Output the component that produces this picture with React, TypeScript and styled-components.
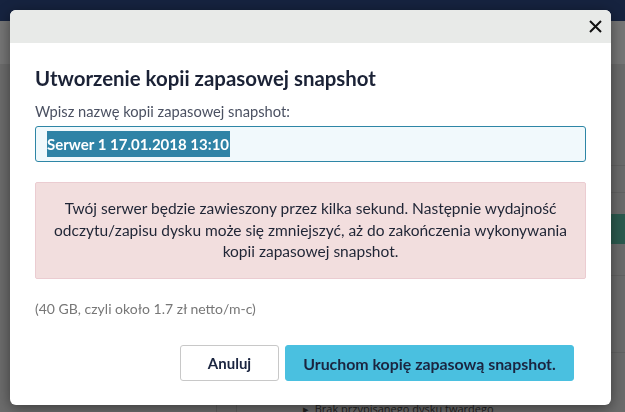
import React from "react";
import styled, { createGlobalStyle } from "styled-components";

const Global = createGlobalStyle`
  html, body { margin: 0; padding: 0; }
  body {
    width: 625px;
    height: 412px;
    overflow: hidden;
    background: #6b6b6b;
    font-family: Lato, "Open Sans", sans-serif;
  }
`;

const Page = styled.div`
  width: 625px;
  height: 412px;
  display: flex;
  flex-direction: column;
  background: #6b6b6b;
`;

const TopBar = styled.div`
  height: 24px;
  background: #16233f;
`;

const SubBar = styled.div`
  height: 48px;
  background: #767676;
`;

const Content = styled.div`
  flex: 1;
  display: grid;
  grid-template-columns: 216px 21px 1fr;
`;

const SideCol = styled.div`
  background: #6c6c6c;
`;

const Divider = styled.div`
  border-left: 1px solid #5e5e5e;
  border-right: 1px solid #5e5e5e;
  background: #6a6a6a;
`;

const MainCol = styled.div`
  display: flex;
  flex-direction: column;
  padding-top: 101px;
`;

const BgRow = styled.div<{ $h: number }>`
  height: ${(p) => p.$h}px;
  box-sizing: border-box;
  border-top: 1px solid #626262;
  display: flex;
  justify-content: flex-end;
  align-items: flex-start;
`;

const GreenBox = styled.div`
  width: 24px;
  height: 30px;
  margin-top: 21px;
  background: #2b5a4e;
  margin-right: -6px;
`;

const BgText = styled.div`
  position: absolute;
  left: 303px;
  top: 401px;
  font-family: "Open Sans", sans-serif;
  font-size: 11px;
  color: #222;
  white-space: nowrap;
`;

const Overlay = styled.div`
  position: fixed;
  inset: 0;
  padding: 10px 14px 7px 10px;
  display: flex;
  align-items: flex-start;
`;

const Modal = styled.div`
  width: 601px;
  height: 395px;
  background: #fff;
  border-radius: 6px;
  overflow: hidden;
  box-shadow: 0 3px 14px rgba(0, 0, 0, 0.45);
  display: flex;
  flex-direction: column;
`;

const Header = styled.div`
  height: 33px;
  background: #e8eae8;
  display: flex;
  justify-content: flex-end;
  align-items: center;
  padding-right: 9px;
`;

const CloseBtn = styled.button`
  border: 0;
  background: transparent;
  padding: 0;
  width: 14px;
  height: 14px;
  display: flex;
  align-items: center;
  justify-content: center;
  margin-top: -1px;
  cursor: pointer;
`;

const Body = styled.div`
  padding: 23px 25px 0 25px;
  display: flex;
  flex-direction: column;
`;

const Title = styled.h2`
  margin: 0;
  font-size: 20.4px;
  line-height: 24px;
  font-weight: 700;
  color: #1b2236;
`;

const Label = styled.label`
  margin-top: 12px;
  font-size: 14.7px;
  line-height: 18px;
  color: #4b5162;
`;

const InputBox = styled.div`
  margin-top: 6px;
  height: 34px;
  border: 1px solid #2e86a6;
  border-radius: 3px;
  background: #f1f9fc;
  display: flex;
  align-items: center;
  padding-left: 11px;
`;

const Selected = styled.span`
  background: #2f83a6;
  color: #fff;
  font-weight: 700;
  font-size: 15px;
  line-height: 26px;
  padding-right: 1px;
`;

const Alert = styled.div`
  margin-top: 20px;
  height: 97px;
  box-sizing: border-box;
  background: #f2dede;
  border: 1px solid #ebccd1;
  border-radius: 2px;
  display: flex;
  align-items: center;
  justify-content: center;
  text-align: center;
  padding: 0 18px;
  font-size: 15.5px;
  line-height: 21.5px;
  color: #1f2535;
`;

const Note = styled.div`
  margin-top: 21px;
  font-size: 14px;
  line-height: 18px;
  color: #777;
`;

const Footer = styled.div`
  margin-top: 27px;
  padding-right: 37px;
  display: flex;
  justify-content: flex-end;
  gap: 6px;
`;

const Button = styled.button<{ $primary?: boolean }>`
  height: 36px;
  box-sizing: border-box;
  border-radius: 3px;
  border: 1px solid ${(p) => (p.$primary ? "#4ac0e0" : "#c8c8c8")};
  background: ${(p) => (p.$primary ? "#4ac0e0" : "#fff")};
  color: #1b2540;
  font-family: Lato, "Open Sans", sans-serif;
  font-weight: 700;
  font-size: ${(p) => (p.$primary ? "15.9px" : "15px")};
  width: ${(p) => (p.$primary ? "289px" : "99px")};
  padding: 0;
  cursor: pointer;
`;

export default function App() {
  return (
    <>
      <Global />
      <Page>
        <TopBar />
        <SubBar />
        <Content>
          <SideCol />
          <Divider />
          <MainCol>
            <BgRow $h={27} />
            <BgRow $h={83}>
              <GreenBox />
            </BgRow>
            <BgRow $h={77} />
            <BgRow $h={60} />
          </MainCol>
        </Content>
        <BgText>▸&nbsp;&nbsp;Brak przypisanego dysku twardego</BgText>
      </Page>
      <Overlay>
        <Modal>
          <Header>
            <CloseBtn aria-label="Zamknij">
              <svg width="13" height="13" viewBox="0 0 13 13">
                <path d="M1 1 L12 12 M12 1 L1 12" stroke="#111" strokeWidth="2" />
              </svg>
            </CloseBtn>
          </Header>
          <Body>
            <Title>Utworzenie kopii zapasowej snapshot</Title>
            <Label>Wpisz nazwę kopii zapasowej snapshot:</Label>
            <InputBox>
              <Selected>Serwer 1 17.01.2018 13:10</Selected>
            </InputBox>
            <Alert>
              Twój serwer będzie zawieszony przez kilka sekund. Następnie wydajność odczytu/zapisu dysku może się zmniejszyć, aż do zakończenia wykonywania kopii zapasowej snapshot.
            </Alert>
            <Note>(40 GB, czyli około 1.7 zł netto/m-c)</Note>
          </Body>
          <Footer>
            <Button>Anuluj</Button>
            <Button $primary>Uruchom kopię zapasową snapshot.</Button>
          </Footer>
        </Modal>
      </Overlay>
    </>
  );
}
